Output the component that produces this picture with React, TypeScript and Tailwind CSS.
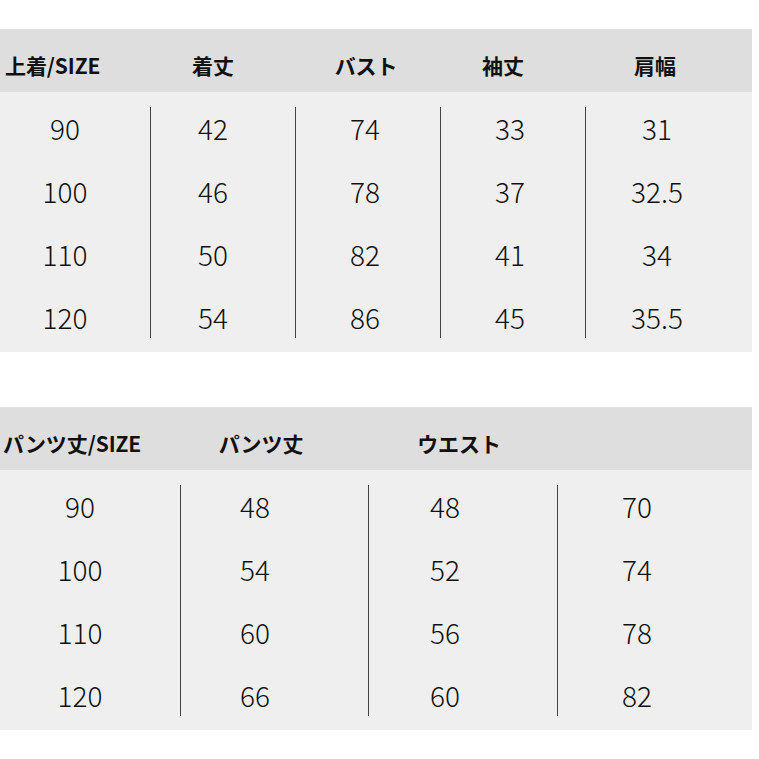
import React from "react";

const FONT = "font-['Noto_Sans_CJK_JP','Noto_Sans',sans-serif]";

type Col = { w: string; head: string; cell: string; divider: boolean };

interface SizeTableProps {
  headers: string[];
  rows: string[][];
  cols: Col[];
}

function SizeTable({ headers, rows, cols }: SizeTableProps) {
  return (
    <div className="w-[752px]">
      <div className="flex h-[63px] items-center bg-[#dedede] pt-[9px]">
        {cols.map((c, i) => (
          <div
            key={i}
            className={`${c.w} ${c.head} text-[21px] font-bold leading-none text-[#111] tracking-[-0.1px]`}
          >
            {headers[i]}
          </div>
        ))}
      </div>
      <div className="flex bg-[#efefef] pt-[4px] pb-[4px]">
        {cols.map((c, i) => (
          <div key={i} className={`${c.w} relative flex flex-col`}>
            {c.divider && (
              <span className="absolute left-0 top-[11px] bottom-[10px] w-px bg-[#444]" />
            )}
            {rows.map((r, j) => (
              <div
                key={j}
                className={`${c.cell} flex h-[63px] items-center justify-center text-[28px] font-light text-[#111]`}
              >
                {r[i]}
              </div>
            ))}
          </div>
        ))}
      </div>
    </div>
  );
}

const topCols: Col[] = [
  { w: "w-[150px]", head: "pl-[5px] text-left", cell: "pr-[20px]", divider: false },
  { w: "w-[145px]", head: "pr-[19px] text-center", cell: "pr-[19px]", divider: true },
  { w: "w-[145px]", head: "pr-[3px] text-center", cell: "pr-[5px]", divider: true },
  { w: "w-[145px]", head: "pr-[19px] text-center", cell: "pr-[5px]", divider: true },
  { w: "w-[167px]", head: "pr-[27px] text-center", cell: "pr-[23px]", divider: true },
];

const bottomCols: Col[] = [
  { w: "w-[180px]", head: "pl-[3px] text-left", cell: "pr-[20px]", divider: false },
  { w: "w-[188px]", head: "pr-[26px] text-center", cell: "pr-[38px]", divider: true },
  { w: "w-[189px]", head: "pr-[7px] text-center", cell: "pr-[35px]", divider: true },
  { w: "w-[195px]", head: "text-center", cell: "pr-[35px]", divider: true },
];

export default function App() {
  return (
    <div className={`${FONT} w-[759px] h-[759px] bg-white pt-[29px]`}>
      <SizeTable
        cols={topCols}
        headers={["上着/SIZE", "着丈", "バスト", "袖丈", "肩幅"]}
        rows={[
          ["90", "42", "74", "33", "31"],
          ["100", "46", "78", "37", "32.5"],
          ["110", "50", "82", "41", "34"],
          ["120", "54", "86", "45", "35.5"],
        ]}
      />
      <div className="h-[55px]" />
      <SizeTable
        cols={bottomCols}
        headers={["パンツ丈/SIZE", "パンツ丈", "ウエスト", ""]}
        rows={[
          ["90", "48", "48", "70"],
          ["100", "54", "52", "74"],
          ["110", "60", "56", "78"],
          ["120", "66", "60", "82"],
        ]}
      />
    </div>
  );
}
